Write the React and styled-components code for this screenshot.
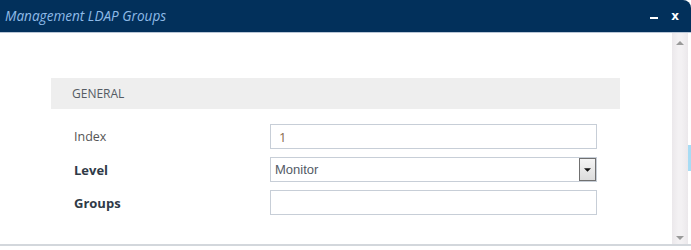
import React from "react";
import styled, { createGlobalStyle } from "styled-components";

const Global = createGlobalStyle`
  html, body { margin: 0; padding: 0; background: #ffffff; }
  body { font-family: "Open Sans", "Liberation Sans", sans-serif; }
`;

const Window = styled.div`
  width: 691px;
  height: 250px;
  display: flex;
  flex-direction: column;
  background: #ffffff;
`;

const TitleBar = styled.div`
  height: 32px;
  background: #02305b;
  border-bottom: 1px solid #b9c6d6;
  border-top-right-radius: 8px;
  display: flex;
  align-items: center;
  padding: 0 12px 0 5px;
`;

const Title = styled.div`
  flex: 1;
  font-style: italic;
  font-size: 13.6px;
  color: #8fbbe8;
  margin-top: -2px;
`;

const Minimize = styled.span`
  width: 8px;
  height: 2px;
  background: #ffffff;
  margin-top: 3px;
`;

const Close = styled.span`
  color: #ffffff;
  font-weight: bold;
  font-size: 12px;
  margin-left: 13px;
  line-height: 1;
  font-family: "DejaVu Sans", "Liberation Sans", sans-serif;
`;

const Body = styled.div`
  height: 211px;
  display: flex;
  border-bottom: 2px solid #d3d7dc;
`;

const Content = styled.div`
  flex: 1;
  padding: 45px 0 0 51px;
`;

const Section = styled.div`
  width: 569px;
`;

const SectionHeader = styled.div`
  height: 31px;
  background: #eeeeee;
  display: flex;
  align-items: center;
  padding-left: 21px;
  font-size: 12px;
  color: #555b63;
`;

const Rows = styled.div`
  padding-top: 15px;
  display: flex;
  flex-direction: column;
  gap: 8px;
`;

const Row = styled.div`
  display: grid;
  grid-template-columns: 196px 327px;
  padding-left: 23px;
  align-items: center;
  height: 25px;
`;

const Label = styled.div`
  font-size: ${(p) => (p.$bold ? 13 : 12.5)}px;
  font-weight: ${(p) => (p.$bold ? 700 : 400)};
  color: ${(p) => (p.$bold ? "#2f3a47" : "#555")};
`;

const Field = styled.div`
  box-sizing: border-box;
  height: 25px;
  border: 1px solid #c7ced7;
  display: flex;
  align-items: center;
  padding-left: ${(p) => p.$pad || 8}px;
  font-size: 13px;
  color: ${(p) => p.$color || "#545b66"};
  font-family: ${(p) =>
    p.$sans ? '"Liberation Sans", Arial, sans-serif' : '"Open Sans", sans-serif'};
`;

const SelectText = styled.span`
  flex: 1;
`;

const SelectButton = styled.div`
  box-sizing: border-box;
  width: 17px;
  height: 23px;
  border: 1px solid #707070;
  background: linear-gradient(#f4f4f4, #dcdcdc);
  display: flex;
  align-items: center;
  justify-content: center;
`;

const Scrollbar = styled.div`
  width: 16px;
  background: linear-gradient(90deg, #ebe8eb 0, #f3f1f3 40%, #f3f1f3 60%, #ebe8eb 100%);
  display: flex;
  flex-direction: column;
  justify-content: space-between;
  align-items: center;
  padding: 8px 0 4px;
  box-sizing: border-box;
`;

const Edge = styled.div`
  width: 3px;
  display: flex;
  flex-direction: column;
`;

const EdgeMark = styled.div`
  margin-top: 112px;
  height: 26px;
  background: #a8dcf4;
`;

const Arrow = ({ down, color = "#9a9a9a", w = 8, h = 4 }) => (
  <svg width={w} height={h} viewBox="0 0 8 4">
    {down ? (
      <polygon points="0,0 8,0 4,4" fill={color} />
    ) : (
      <polygon points="0,4 8,4 4,0" fill={color} />
    )}
  </svg>
);

export default function App() {
  return (
    <>
      <Global />
      <Window>
        <TitleBar>
          <Title>Management LDAP Groups</Title>
          <Minimize />
          <Close>x</Close>
        </TitleBar>
        <Body>
          <Content>
            <Section>
              <SectionHeader>GENERAL</SectionHeader>
              <Rows>
                <Row>
                  <Label>Index</Label>
                  <Field $color="#8a6c4e">1</Field>
                </Row>
                <Row>
                  <Label $bold>Level</Label>
                  <Field $pad={4} $sans>
                    <SelectText>Monitor</SelectText>
                    <SelectButton>
                      <Arrow down color="#111" w={7} h={4} />
                    </SelectButton>
                  </Field>
                </Row>
                <Row>
                  <Label $bold>Groups</Label>
                  <Field />
                </Row>
              </Rows>
            </Section>
          </Content>
          <Scrollbar>
            <Arrow />
            <Arrow down />
          </Scrollbar>
          <Edge>
            <EdgeMark />
          </Edge>
        </Body>
      </Window>
    </>
  );
}
